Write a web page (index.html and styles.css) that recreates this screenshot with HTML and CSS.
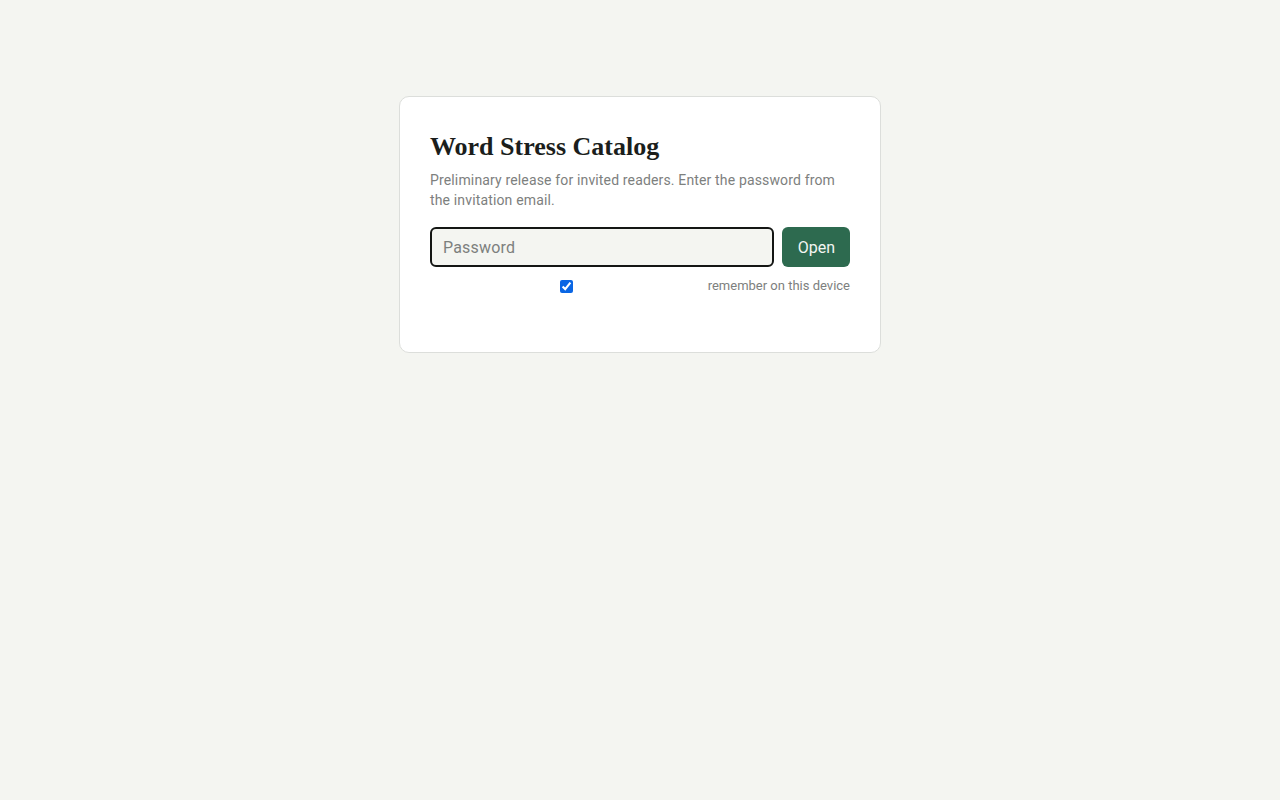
FILE: index.html
```html
<!DOCTYPE html>
<html lang="en">
<head>
<meta charset="utf-8">
<title>Word Stress Catalog</title>
<link rel="stylesheet" href="styles.css">
</head>
<body>
<main class="page">
  <form class="card">
    <h1 class="title">Word Stress Catalog</h1>
    <p class="lead">Preliminary release for invited readers. Enter the password from the invitation email.</p>
    <div class="row">
      <input class="field" type="password" placeholder="Password">
      <button class="btn" type="button">Open</button>
    </div>
    <label class="remember">
      <input class="check" type="checkbox" checked>
      <span>remember on this device</span>
    </label>
  </form>
</main>
</body>
</html>
```
FILE: styles.css
```css
html, body {
  margin: 0;
  padding: 0;
  background: #f4f5f1;
  font-family: Roboto, "Liberation Sans", sans-serif;
  color: #1c1f1d;
}
.page {
  display: flex;
  justify-content: center;
  padding-top: 96px;
}
.card {
  width: 420px;
  background: #ffffff;
  border: 1px solid #dcdedb;
  border-radius: 10px;
  padding: 31px 30px 57px;
}
.title {
  margin: 0;
  font-family: "Liberation Serif", "DejaVu Serif", serif;
  font-size: 26px;
  font-weight: 700;
  line-height: 38px;
  color: #1b1e1c;
}
.lead {
  margin: 4px 0 17px;
  font-size: 14px;
  line-height: 20px;
  letter-spacing: 0.15px;
  color: #7d807e;
}
.row {
  display: flex;
  gap: 8px;
}
.field {
  flex: 1;
  min-width: 0;
  height: 40px;
  box-sizing: border-box;
  border: 2px solid #141614;
  border-radius: 6px;
  background: #f4f5f1;
  padding: 0 11px;
  font-family: inherit;
  font-size: 16px;
  letter-spacing: 0.2px;
  color: #1c1f1d;
  outline: none;
}
.field::placeholder {
  color: #7d807e;
}
.btn {
  height: 40px;
  padding: 0 15px 0 16px;
  border: none;
  border-radius: 6px;
  background: #2d6a4f;
  color: #f3f6f2;
  font-family: inherit;
  font-size: 16px;
}
.remember {
  display: flex;
  align-items: center;
  gap: 5px;
  margin-top: 10px;
  font-size: 13px;
  line-height: 18px;
  color: #7d807e;
}
.check {
  flex: 1;
  margin: 0;
  height: 13px;
  accent-color: #0a66e4;
}
```
